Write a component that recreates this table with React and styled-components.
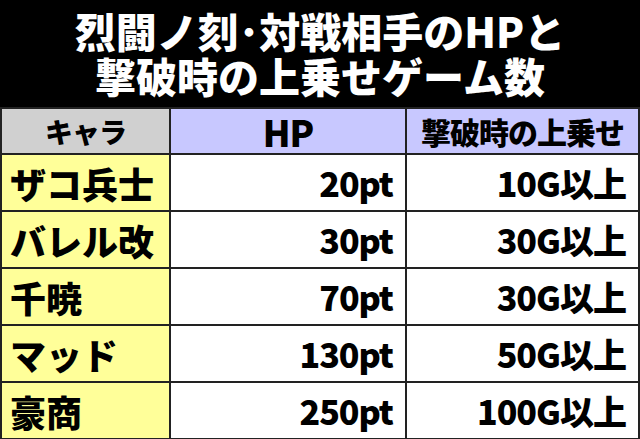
import React from 'react';
import styled, { createGlobalStyle } from 'styled-components';

const GlobalStyle = createGlobalStyle`
  html, body {
    margin: 0;
    padding: 0;
    background: #000;
  }
  body {
    font-family: "Noto Sans CJK JP", "Noto Sans", sans-serif;
  }
`;

const rows = [
  { name: 'ザコ兵士', hp: '20pt', bonus: '10G以上' },
  { name: 'バレル改', hp: '30pt', bonus: '30G以上' },
  { name: '千暁', hp: '70pt', bonus: '30G以上' },
  { name: 'マッド', hp: '130pt', bonus: '50G以上' },
  { name: '豪商', hp: '250pt', bonus: '100G以上' },
];

const App = () => {
  return (
    <Page>
      <GlobalStyle />
      <Title>
        <TitleLine>烈闘ノ刻･対戦相手のHPと</TitleLine>
        <TitleLine>撃破時の上乗せゲーム数</TitleLine>
      </Title>
      <Table>
        <HeadCell tone="gray" size={28}>キャラ</HeadCell>
        <HeadCell tone="blue" size={36}>HP</HeadCell>
        <HeadCell tone="blue" size={30}>撃破時の上乗せ</HeadCell>
        {rows.map((r) => (
          <React.Fragment key={r.name}>
            <NameCell>{r.name}</NameCell>
            <ValueCell>{r.hp}</ValueCell>
            <ValueCell>{r.bonus}</ValueCell>
          </React.Fragment>
        ))}
      </Table>
    </Page>
  );
};

const Page = styled.div`
  width: 640px;
  height: 439px;
  overflow: hidden;
  background: #000;
`;

const Title = styled.h1`
  margin: 0;
  height: 107px;
  box-sizing: border-box;
  padding-top: 8px;
  display: flex;
  flex-direction: column;
  align-items: center;
  color: #fff;
  font-size: 41px;
  font-weight: 900;
  line-height: 1;
`;

const TitleLine = styled.span`
  display: flex;
  align-items: center;
  height: 45px;
  white-space: nowrap;
`;

const Table = styled.div`
  display: grid;
  grid-template-columns: 167px 234px 231px;
  grid-template-rows: 44px repeat(5, 55px);
  gap: 2px;
  padding: 2px;
  background: #222;
`;

const Cell = styled.div`
  display: flex;
  align-items: center;
  color: #000;
  font-weight: 900;
  line-height: 1;
  white-space: nowrap;
`;

const HeadCell = styled(Cell)`
  justify-content: center;
  background: ${(p) => (p.tone === 'gray' ? '#d0d0d0' : '#c8c8ff')};
  font-size: ${(p) => p.size}px;
  letter-spacing: -1px;
`;

const NameCell = styled(Cell)`
  background: #ffff99;
  padding-left: 8px;
  font-size: 36px;
`;

const ValueCell = styled(Cell)`
  justify-content: flex-end;
  background: #fff;
  padding-right: 12px;
  font-size: 34px;
  letter-spacing: -1px;
`;

export default App;
